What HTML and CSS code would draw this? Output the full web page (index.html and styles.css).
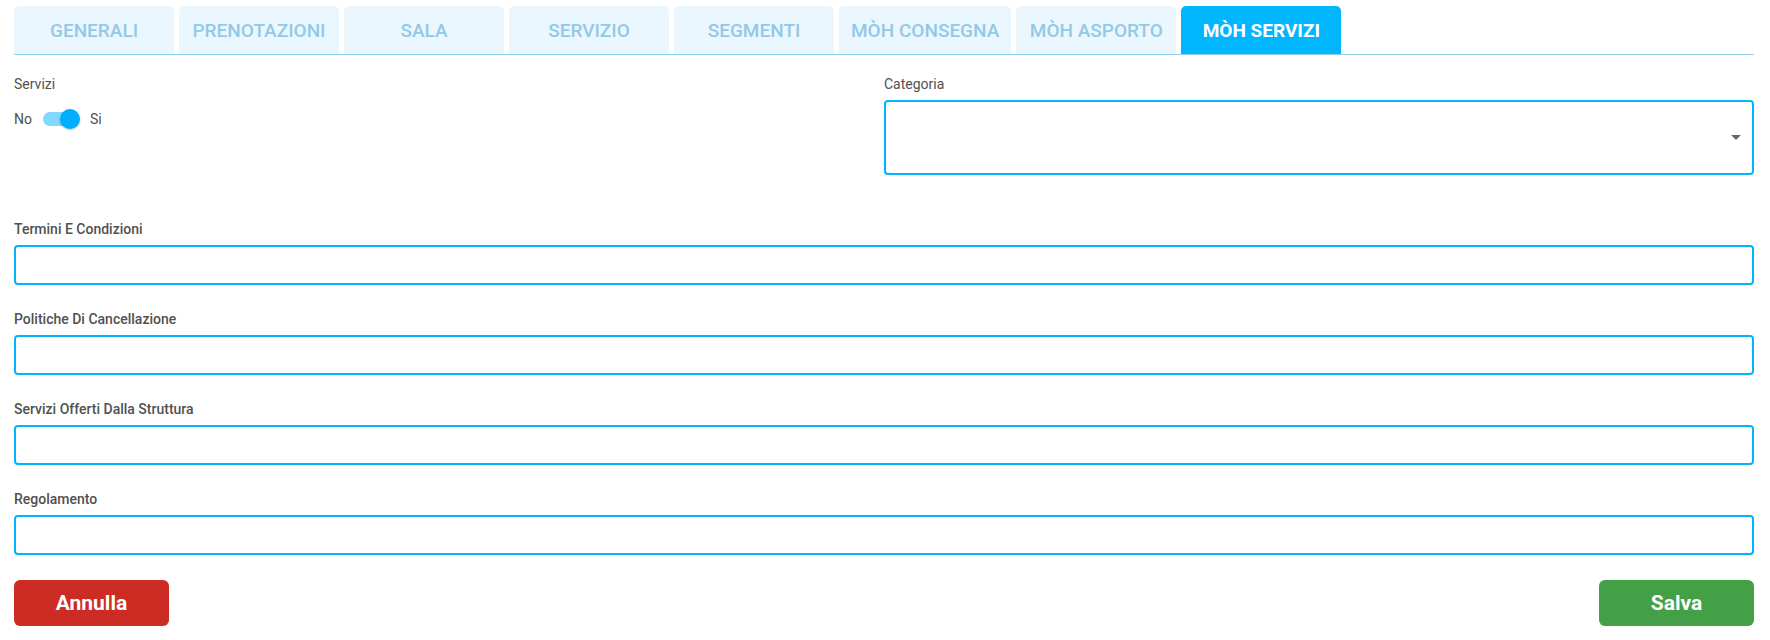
FILE: index.html
```html
<!DOCTYPE html>
<html lang="it">
<head>
<meta charset="utf-8">
<title>Mòh Servizi</title>
<link rel="stylesheet" href="styles.css">
</head>
<body>
<div class="page">
  <nav class="tabs">
    <div class="tab">GENERALI</div>
    <div class="tab">PRENOTAZIONI</div>
    <div class="tab">SALA</div>
    <div class="tab">SERVIZIO</div>
    <div class="tab">SEGMENTI</div>
    <div class="tab">MÒH CONSEGNA</div>
    <div class="tab">MÒH ASPORTO</div>
    <div class="tab active">MÒH SERVIZI</div>
  </nav>

  <div class="top-row">
    <div class="col">
      <div class="label light">Servizi</div>
      <div class="switch-row">
        <span class="opt">No</span>
        <span class="switch"><span class="track"></span><span class="thumb"></span></span>
        <span class="opt">Si</span>
      </div>
    </div>
    <div class="col">
      <div class="label light">Categoria</div>
      <div class="select">
        <svg class="arrow" width="10" height="5" viewBox="0 0 10 5"><path d="M0 0 L10 0 L5 5 Z" fill="#666"/></svg>
      </div>
    </div>
  </div>

  <div class="field">
    <div class="label">Termini E Condizioni</div>
    <input class="input" type="text">
  </div>
  <div class="field">
    <div class="label">Politiche Di Cancellazione</div>
    <input class="input" type="text">
  </div>
  <div class="field">
    <div class="label">Servizi Offerti Dalla Struttura</div>
    <input class="input" type="text">
  </div>
  <div class="field last">
    <div class="label">Regolamento</div>
    <input class="input" type="text">
  </div>

  <div class="actions">
    <button class="btn cancel">Annulla</button>
    <button class="btn save">Salva</button>
  </div>
</div>
</body>
</html>
```

FILE: styles.css
```css
* { box-sizing: border-box; }
html, body { margin: 0; padding: 0; background: #fff; }
body { font-family: Roboto, "Liberation Sans", sans-serif; color: #4f4f4f; }

.page { padding: 6px 16px 0 14px; }

.tabs {
  display: flex;
  gap: 5px;
  border-bottom: 1px solid #8fd0ea;
}
.tab {
  height: 48px;
  min-width: 160px;
  padding: 0 12px;
  display: flex;
  align-items: center;
  justify-content: center;
  background: #eaf7fe;
  color: #93c9e6;
  font-size: 19px;
  font-weight: 500;
  border-radius: 5px 5px 0 0;
  white-space: nowrap;
}
.tab.active {
  background: #00b6ff;
  color: #fff;
  font-weight: 700;
}

.top-row {
  display: grid;
  grid-template-columns: 1fr 1fr;
  margin-top: 21px;
}

.label {
  font-size: 14px;
  line-height: 17px;
  font-weight: 500;
  color: #515151;
}
.label.light { font-weight: 400; }

.switch-row {
  display: flex;
  align-items: center;
  margin-top: 16px;
  height: 20px;
  font-size: 14px;
  color: #4f4f4f;
}
.switch {
  position: relative;
  width: 37px;
  height: 20px;
  margin: 0 10px 0 11px;
  display: flex;
  align-items: center;
}
.track {
  width: 34px;
  height: 14px;
  border-radius: 7px;
  background: #80d8ff;
}
.thumb {
  position: absolute;
  right: 0;
  top: 0;
  width: 20px;
  height: 20px;
  border-radius: 50%;
  background: #00b0ff;
  box-shadow: 0 1px 2px rgba(0,0,0,0.25);
}

.select {
  margin-top: 7px;
  height: 75px;
  border: 2px solid #00b4ff;
  border-radius: 4px;
  display: flex;
  align-items: center;
  justify-content: flex-end;
  padding-right: 11px;
}
.arrow { display: block; }

.field { margin-top: 46px; }
.field + .field { margin-top: 26px; }
.input {
  display: block;
  width: 100%;
  height: 40px;
  margin-top: 7px;
  border: 2px solid #00b4ff;
  border-radius: 4px;
  outline: none;
  background: #fff;
  font: inherit;
}

.actions {
  display: flex;
  justify-content: space-between;
  margin-top: 25px;
}
.btn {
  width: 155px;
  height: 46px;
  border: none;
  border-radius: 6px;
  color: #fff;
  font-family: Roboto, "Liberation Sans", sans-serif;
  font-size: 21px;
  font-weight: 700;
}
.btn.cancel { background: #cc2c24; }
.btn.save { background: #43a047; }
```
